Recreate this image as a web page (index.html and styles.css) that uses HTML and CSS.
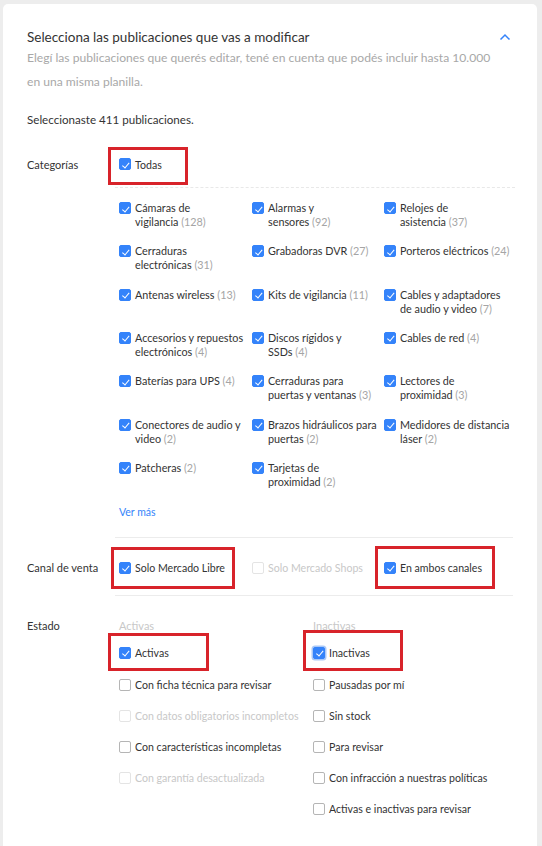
FILE: index.html
```html
<!DOCTYPE html>
<html lang="es">
<head>
<meta charset="utf-8">
<title>Selecciona las publicaciones</title>
<link rel="stylesheet" href="styles.css">
</head>
<body>
<div class="card">
  <div class="head">
    <h1 class="title">Selecciona las publicaciones que vas a modificar</h1>
    <svg class="chevron" width="12" height="8" viewBox="0 0 12 8"><path d="M1.5 6.5 L6 2 L10.5 6.5" fill="none" stroke="#3483fa" stroke-width="1.5"/></svg>
  </div>
  <p class="subtitle">Elegí las publicaciones que querés editar, tené en cuenta que podés incluir hasta 10.000<br>en una misma planilla.</p>
  <p class="count-text">Seleccionaste 411 publicaciones.</p>

  <div class="section sec-cat">
    <div class="label">Categorías</div>
    <div class="content">
      <div class="opt mark mark-todas"><span class="cb on"></span><span class="txt">Todas</span></div>
      <div class="dotted"></div>
      <div class="cat-grid">
        <div class="opt"><span class="cb on"></span><span class="txt">Cámaras de<br>vigilancia <span class="n">(128)</span></span></div>
        <div class="opt"><span class="cb on"></span><span class="txt">Alarmas y<br>sensores <span class="n">(92)</span></span></div>
        <div class="opt"><span class="cb on"></span><span class="txt">Relojes de<br>asistencia <span class="n">(37)</span></span></div>
        <div class="opt"><span class="cb on"></span><span class="txt">Cerraduras<br>electrónicas <span class="n">(31)</span></span></div>
        <div class="opt"><span class="cb on"></span><span class="txt">Grabadoras DVR <span class="n">(27)</span></span></div>
        <div class="opt"><span class="cb on"></span><span class="txt">Porteros eléctricos <span class="n">(24)</span></span></div>
        <div class="opt"><span class="cb on"></span><span class="txt">Antenas wireless <span class="n">(13)</span></span></div>
        <div class="opt"><span class="cb on"></span><span class="txt">Kits de vigilancia <span class="n">(11)</span></span></div>
        <div class="opt"><span class="cb on"></span><span class="txt">Cables y adaptadores<br>de audio y video <span class="n">(7)</span></span></div>
        <div class="opt"><span class="cb on"></span><span class="txt">Accesorios y repuestos<br>electrónicos <span class="n">(4)</span></span></div>
        <div class="opt"><span class="cb on"></span><span class="txt">Discos rígidos y<br>SSDs <span class="n">(4)</span></span></div>
        <div class="opt"><span class="cb on"></span><span class="txt">Cables de red <span class="n">(4)</span></span></div>
        <div class="opt"><span class="cb on"></span><span class="txt">Baterías para UPS <span class="n">(4)</span></span></div>
        <div class="opt"><span class="cb on"></span><span class="txt">Cerraduras para<br>puertas y ventanas <span class="n">(3)</span></span></div>
        <div class="opt"><span class="cb on"></span><span class="txt">Lectores de<br>proximidad <span class="n">(3)</span></span></div>
        <div class="opt"><span class="cb on"></span><span class="txt">Conectores de audio y<br>video <span class="n">(2)</span></span></div>
        <div class="opt"><span class="cb on"></span><span class="txt">Brazos hidráulicos para<br>puertas <span class="n">(2)</span></span></div>
        <div class="opt"><span class="cb on"></span><span class="txt">Medidores de distancia<br>láser <span class="n">(2)</span></span></div>
        <div class="opt"><span class="cb on"></span><span class="txt">Patcheras <span class="n">(2)</span></span></div>
        <div class="opt"><span class="cb on"></span><span class="txt">Tarjetas de<br>proximidad <span class="n">(2)</span></span></div>
      </div>
      <a class="more" href="#">Ver más</a>
    </div>
  </div>

  <div class="rule"></div>

  <div class="section sec-canal">
    <div class="label">Canal de venta</div>
    <div class="content canal-row">
      <div class="opt mark mark-ml"><span class="cb on"></span><span class="txt">Solo Mercado Libre</span></div>
      <div class="opt off"><span class="cb dis"></span><span class="txt">Solo Mercado Shops</span></div>
      <div class="opt mark mark-ambos"><span class="cb on"></span><span class="txt">En ambos canales</span></div>
    </div>
  </div>

  <div class="rule"></div>

  <div class="section sec-estado">
    <div class="label">Estado</div>
    <div class="content estado-cols">
      <div class="col col-left">
        <div class="col-head">Activas</div>
        <div class="opt mark mark-act"><span class="cb on"></span><span class="txt">Activas</span></div>
        <div class="opt"><span class="cb"></span><span class="txt">Con ficha técnica para revisar</span></div>
        <div class="opt off"><span class="cb dis"></span><span class="txt">Con datos obligatorios incompletos</span></div>
        <div class="opt"><span class="cb"></span><span class="txt">Con características incompletas</span></div>
        <div class="opt off"><span class="cb dis"></span><span class="txt">Con garantía desactualizada</span></div>
      </div>
      <div class="col">
        <div class="col-head">Inactivas</div>
        <div class="opt mark mark-inact"><span class="cb on focus"></span><span class="txt">Inactivas</span></div>
        <div class="opt"><span class="cb"></span><span class="txt">Pausadas por mí</span></div>
        <div class="opt"><span class="cb"></span><span class="txt">Sin stock</span></div>
        <div class="opt"><span class="cb"></span><span class="txt">Para revisar</span></div>
        <div class="opt"><span class="cb"></span><span class="txt">Con infracción a nuestras políticas</span></div>
        <div class="opt"><span class="cb"></span><span class="txt">Activas e inactivas para revisar</span></div>
      </div>
    </div>
  </div>
</div>
</body>
</html>
```
FILE: styles.css
```css
*, *::before, *::after { box-sizing: border-box; }
html, body { margin: 0; padding: 0; }
body {
  background: #ededed;
  font-family: Lato, "Liberation Sans", sans-serif;
  color: #333;
  height: 846px;
  overflow: hidden;
}
.card {
  margin: 4px 5px 0 3px;
  background: #fff;
  border-radius: 5px 5px 0 0;
  padding: 24px 24px 60px 24px;
  min-height: 860px;
}
.head {
  display: flex;
  justify-content: space-between;
  align-items: center;
}
.title {
  margin: 0;
  font-size: 13.5px;
  line-height: 18px;
  font-weight: 400;
  color: #333;
}
.chevron { margin-right: 2px; }
.subtitle {
  margin: 0;
  font-size: 12.1px;
  line-height: 24px;
  color: #a8a8a8;
}
.count-text {
  margin: 18px 0 0;
  font-size: 11.6px;
  line-height: 16px;
}
.section {
  display: grid;
  grid-template-columns: 92px 1fr;
}
.label {
  font-size: 11px;
  line-height: 16px;
  color: #333;
}
.sec-cat { margin-top: 28px; }
.sec-cat .label { position: relative; top: 1px; }
.opt {
  display: flex;
  align-items: flex-start;
  gap: 4px;
  font-size: 10.6px;
  line-height: 16px;
  color: #333;
}
.opt .cb { margin-top: 2px; }
.opt.off { color: #c8c8c8; }
.mark-todas .txt { position: relative; top: 1px; }
.cb {
  flex: none;
  width: 12px;
  height: 12px;
  border-radius: 2px;
  border: 1px solid #b5b5b5;
  background: #fff;
  position: relative;
}
.cb.on {
  background: #3483fa;
  border-color: #3483fa;
}
.cb.on::after {
  content: "";
  position: absolute;
  left: 3.5px;
  top: 1.5px;
  width: 3.5px;
  height: 6.5px;
  border: solid #fff;
  border-width: 0 1.3px 1.3px 0;
  transform: rotate(40deg);
}
.cb.dis { border-color: #e4e4e4; }
.cb.focus { box-shadow: 0 0 0 1.5px #a9c8f7; }
.n { color: #a5a5a5; }

.mark { position: relative; align-self: flex-start; }
.mark::before {
  content: "";
  position: absolute;
  border: 3px solid #d8232a;
  pointer-events: none;
}
.mark-todas::before { left: -11px; top: -9px; width: 80px; height: 38px; }
.mark-ml::before { left: -8px; top: -13px; width: 124px; height: 42px; }
.mark-ambos::before { left: -9px; top: -14px; width: 120px; height: 43px; }
.mark-act::before { left: -11px; top: -12px; width: 101px; height: 38px; }
.mark-inact::before { left: -10px; top: -15px; width: 100px; height: 41px; }
.mark-todas { width: max-content; }

.dotted {
  margin: 15px 0 0 -4px;
  border-top: 1px dashed #e8e8e8;
}
.cat-grid {
  margin-top: 13px;
  display: grid;
  grid-template-columns: 133px 132px 131px;
  grid-auto-rows: 28px;
  row-gap: 15.33px;
}
.cat-grid .opt {
  font-size: 10.8px;
  line-height: 14px;
}
.cat-grid .opt .cb { margin-top: 1px; }
.more {
  display: block;
  margin-top: 16px;
  font-size: 10.5px;
  line-height: 14px;
  color: #3483fa;
  text-decoration: none;
}
.rule {
  margin: 18px 0 0 88px;
  border-top: 1px solid #ececec;
}
.sec-canal { margin-top: 22px; }
.sec-canal + .rule { margin-top: 19px; }
.canal-row {
  display: grid;
  grid-template-columns: 133px 132px 131px;
}
.sec-estado { margin-top: 22px; }
.estado-cols {
  display: grid;
  grid-template-columns: 194px 1fr;
}
.col {
  display: flex;
  flex-direction: column;
  gap: 15px;
}
.col-head {
  font-size: 11px;
  line-height: 16px;
  color: #c8c8c8;
  margin-bottom: -4px;
}
.col .opt.mark { margin-bottom: 1px; }
.col-left .opt { white-space: nowrap; }
```
